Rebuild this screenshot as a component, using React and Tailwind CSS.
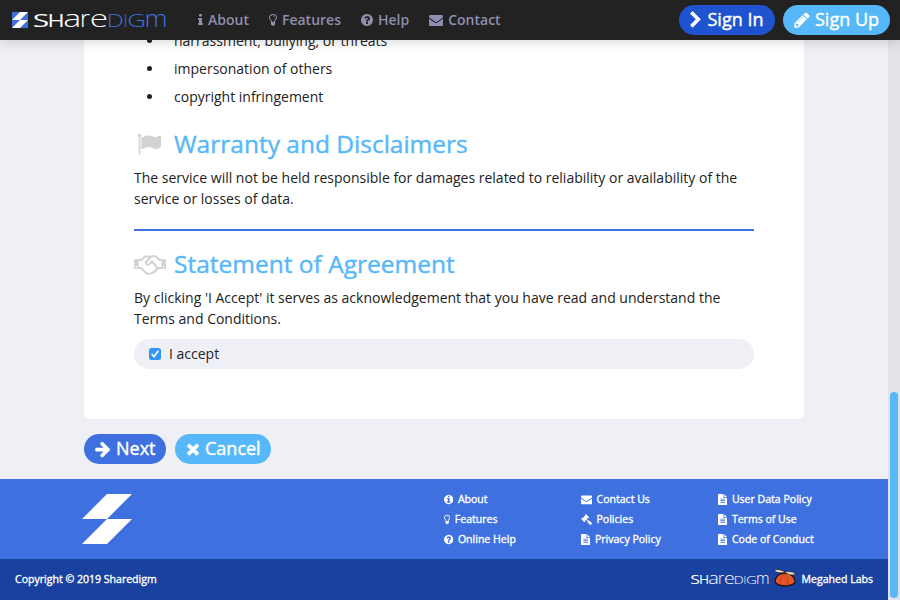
import React from "react";

const CIRCLE = "M1664 896q0 209-103 385.5t-279.5 279.5-385.5 103-385.5-103-279.5-279.5-103-385.5 103-385.5 279.5-279.5 385.5-103 385.5 103 279.5 279.5 103 385.5z";

const PATHS = {
  chevron: "M1363 877l-742 742q-19 19-45 19t-45-19l-166-166q-19-19-19-45t19-45l531-531-531-531q-19-19-19-45t19-45l166-166q19-19 45-19t45 19l742 742q19 19 19 45t-19 45z",
  arrow: "M1600 960q0 54-37 91l-651 651q-39 37-91 37-51 0-90-37l-75-75q-38-38-38-91t38-91l293-293h-704q-52 0-84.5-37.5t-32.5-90.5v-128q0-53 32.5-90.5t84.5-37.5h704l-293-294q-38-36-38-90t38-90l75-75q38-38 90-38 53 0 91 38l651 651q37 35 37 90z",
  times: "M1490 1322q0 40-28 68l-136 136q-28 28-68 28t-68-28l-294-294-294 294q-28 28-68 28t-68-28l-136-136q-28-28-28-68t28-68l294-294-294-294q-28-28-28-68t28-68l136-136q28-28 68-28t68 28l294 294 294-294q28-28 68-28t68 28l136 136q28 28 28 68t-28 68l-294 294 294 294q28 28 28 68z",
  pencil: "M491 1536l91-91-235-235-91 91v107h128v128h107zm523-928q0-22-22-22-10 0-17 7l-542 542q-7 7-7 17 0 22 22 22 10 0 17-7l542-542q7-7 7-17zm-54-192l416 416-832 832h-416v-416zm683 96q0 53-37 90l-166 166-416-416 166-165q36-38 90-38 53 0 91 38l235 234q37 39 37 91z",
  info: "M1216 1344v128q0 26-19 45t-45 19h-512q-26 0-45-19t-19-45v-128q0-26 19-45t45-19h64v-384h-64q-26 0-45-19t-19-45v-128q0-26 19-45t45-19h384q26 0 45 19t19 45v576h64q26 0 45 19t19 45zm-128-1152v192q0 26-19 45t-45 19h-256q-26 0-45-19t-19-45v-192q0-26 19-45t45-19h256q26 0 45 19t19 45z",
  question: "M1024 1376v-192q0-14-9-23t-23-9h-192q-14 0-23 9t-9 23v192q0 14 9 23t23 9h192q14 0 23-9t9-23zm256-672q0-88-55.5-163t-138.5-116-170-41q-243 0-371 213-15 24 8 42l132 100q7 6 19 6 16 0 25-12 53-68 86-92 34-24 86-24 48 0 85.5 26t37.5 59q0 38-20 61t-68 45q-63 28-115.5 86.5t-52.5 125.5v36q0 14 9 23t23 9h192q14 0 23-9t9-23q0-19 21.5-49.5t54.5-49.5q32-18 49-28.5t46-35 44.5-48 28-60.5 12.5-81z" + CIRCLE,
  infoCircle: "M1152 1376v-160q0-14-9-23t-23-9h-96v-512q0-14-9-23t-23-9h-320q-14 0-23 9t-9 23v160q0 14 9 23t23 9h96v320h-96q-14 0-23 9t-9 23v160q0 14 9 23t23 9h448q14 0 23-9t9-23zm-128-896v-160q0-14-9-23t-23-9h-192q-14 0-23 9t-9 23v160q0 14 9 23t23 9h192q14 0 23-9t9-23z" + CIRCLE,
  envelope: "M1792 710v794q0 66-47 113t-113 47h-1472q-66 0-113-47t-47-113v-794q44 49 101 87 362 246 497 345 57 42 92.5 65.5t94.5 48 110 24.5h2q51 0 110-24.5t94.5-48 92.5-65.5q170-123 498-345 57-39 100-87zm0-294q0 79-49 151t-122 123q-376 261-468 325-10 7-42.5 31t-54 38.5-52 32.5-57.5 27-50 9h-2q-23 0-50-9t-57.5-27-52-32.5-54-38.5-42.5-31q-91-64-262-182.5t-205-142.5q-62-42-117-115.5t-55-136.5q0-78 41.5-130t118.5-52h1472q65 0 112.5 47t47.5 113z",
  bulb: "M1120 576q0 13-9.5 22.5t-22.5 9.5-22.5-9.5-9.5-22.5q0-46-54-71t-106-25q-13 0-22.5-9.5t-9.5-22.5 9.5-22.5 22.5-9.5q50 0 99.5 16t87 54 37.5 90zm160 0q0-72-34.5-134t-90-101.5-123-62-136.5-22.5-136.5 22.5-123 62-90 101.5-34.5 134q0 101 68 180 10 11 30.5 33t30.5 33q128 153 141 298h228q13-145 141-298 10-11 30.5-33t30.5-33q68-79 68-180zm128 0q0 155-103 268-45 49-74.5 87t-59.5 95.5-34 107.5q47 28 47 82 0 37-25 64 25 27 25 64 0 52-45 81 13 23 13 47 0 46-31.5 71t-77.5 25q-20 44-60 70t-87 26-87-26-60-70q-46 0-77.5-25t-31.5-71q0-24 13-47-45-29-45-81 0-37 25-64-25-27-25-64 0-54 47-82-4-50-34-107.5t-59.5-95.5-74.5-87q-103-113-103-268 0-99 44.5-184.5t117-142 164-89 186.5-32.5 186.5 32.5 164 89 117 142 44.5 184.5z",
  file: "M1596 476q14 14 28 36h-472v-472q22 14 36 28zm-476 164h544v1056q0 40-28 68t-68 28h-1344q-40 0-68-28t-28-68v-1600q0-40 28-68t68-28h800v544q0 40 28 68t68 28zm160 736v-64q0-14-9-23t-23-9h-704q-14 0-23 9t-9 23v64q0 14 9 23t23 9h704q14 0 23-9t9-23zm0-256v-64q0-14-9-23t-23-9h-704q-14 0-23 9t-9 23v64q0 14 9 23t23 9h704q14 0 23-9t9-23zm0-256v-64q0-14-9-23t-23-9h-704q-14 0-23 9t-9 23v64q0 14 9 23t23 9h704q14 0 23-9t9-23z",
  gavel: "M1771 1536q0 53-37 90l-107 108q-39 37-91 37-53 0-90-37l-363-364q-38-36-38-90 0-53 43-96l-256-256-126 126q-14 14-34 14t-34-14q2 2 12.5 12t12.5 13 10 11.5 10 13.5 6 13.5 5.5 16.5 1.5 18q0 38-28 68-3 3-16.5 18t-19 20.5-18.5 16.5-22 15.5-22 9-26 4.5q-40 0-68-28l-408-408q-28-28-28-68 0-13 4.5-26t9-22 15.5-22 16.5-18.5 20.5-19 18-16.5q30-28 68-28 10 0 18 1.5t16.5 5.5 13.5 6 13.5 10 11.5 10 13 12.5 12 12.5q-14-14-14-34t14-34l348-348q14-14 34-14t34 14q-2-2-12.5-12t-12.5-13-10-11.5-10-13.5-6-13.5-5.5-16.5-1.5-18q0-38 28-68 3-3 16.5-18t19-20.5 18.5-16.5 22-15.5 22-9 26-4.5q40 0 68 28l408 408q28 28 28 68 0 13-4.5 26t-9 22-15.5 22-16.5 18.5-20.5 19-18 16.5q-30 28-68 28-10 0-18-1.5t-16.5-5.5-13.5-6-13.5-10-11.5-10-13-12.5-12-12.5q14 14 14 34t-14 34l-126 126 256 256q43-43 96-43 52 0 91 37l363 363q37 39 37 91z",
  flag: "M320 256q0 72-64 110v1266q0 13-9.5 22.5t-22.5 9.5h-64q-13 0-22.5-9.5t-9.5-22.5v-1266q-64-38-64-110 0-53 37.5-90.5t90.5-37.5 90.5 37.5 37.5 90.5zm1472 64v763q0 25-12.5 38.5t-39.5 27.5q-215 116-369 116-61 0-123.5-22t-108.5-48-115.5-48-142.5-22q-192 0-464 146-17 9-33 9-26 0-45-19t-19-45v-742q0-32 31-55 21-14 79-43 236-120 421-120 107 0 200 29t219 88q38 19 88 19 54 0 117.5-21t110-47 88-47 54.5-21q26 0 45 19t19 45z",
};

// Icons share a 1792-unit grid; `box` trims the side bearings of narrow ones.
function Icon({ name, box = "0 0 1792 1792", className }) {
  return (
    <svg viewBox={box} className={`shrink-0 fill-current ${className}`} fillRule="evenodd">
      <path d={PATHS[name]} />
    </svg>
  );
}

function Handshake() {
  return (
    <svg viewBox="0 0 32 20" className="h-5 w-8" fill="none" stroke="#d2d2d2" strokeWidth="2" strokeLinejoin="round" strokeLinecap="round">
      <path d="M0 4.200H4.500V13.800H0ZM27.500 4.200H32V13.800H27.500ZM2.200 11a.8.8 0 1 0 .1 0ZM29.800 11a.8.8 0 1 0 .1 0Z" fill="#d2d2d2" fillRule="evenodd" stroke="none" />
      <path d="M4.500 5H7.500L10.300 2.200Q11 1.500 12 1.500H14.500L16 2.200L17.500 1.300H21Q22 1.300 22.700 2L25.500 5H27.500M4.500 13H7L11.500 17.500Q13.500 19.500 16 18.600Q18.500 18.700 19.500 17Q21.800 16.800 22.300 14.500L24.500 13H27.500" />
      <path d="M16.500 2.200L12 7Q11.400 8.300 12.500 9.300Q13.800 10.300 15.200 9.200L18 6.500L23 12.500Q23.500 13.800 22.300 14.500" />
    </svg>
  );
}

// [glyph, left edge, ink width, ink start in em, ink width in em, x-height glyph]
const LETTERS = [
  ["S", 0, 13.7, 0.045, 0.456, false],
  ["H", 15.7, 12.6, 0.098, 0.541, false],
  ["a", 30.7, 14.6, 0.046, 0.429, true],
  ["r", 48, 8.3, 0.086, 0.314, true],
  ["e", 57.7, 15.3, 0.056, 0.458, true],
  ["D", 75, 13.7, 0.098, 0.57, false],
  ["I", 91, 1.5, 0.098, 0.083, false],
  ["G", 94.7, 15.3, 0.061, 0.595, false],
  ["m", 112.7, 19.8, 0.086, 0.761, true],
];

function Wordmark({ className, accent }) {
  return (
    <svg viewBox="0 0 134 18" preserveAspectRatio="none" className={`overflow-visible ${className}`}>
      {LETTERS.map(([ch, x, w, start, ink, lower], i) => {
        const size = lower ? 23.4 : 17.6;
        const sx = w / (ink * size);
        return (
          <text
            key={i}
            transform={`translate(${x - start * size * sx} 14.7) scale(${sx} 1)`}
            fontFamily="'Open Sans', sans-serif"
            fontWeight={lower || i > 4 ? 300 : 400}
            fontSize={size}
            fill={i > 4 ? accent : "#fff"}
          >
            {ch}
          </text>
        );
      })}
    </svg>
  );
}

const NAV = [
  ["info", "About", "576 0 640 1792", "w-[5px]"],
  ["bulb", "Features", "384 0 1024 1792", "w-[8px]"],
  ["question", "Help", "128 0 1536 1792", "w-[12px]"],
  ["envelope", "Contact", "0 0 1792 1792", "w-[14px]"],
];

const LINKS = [
  ["w-[137px]", [
    ["infoCircle", "About", "128 0 1536 1792", "w-[9.4px]"],
    ["bulb", "Features", "384 0 1024 1792", "w-[6.3px]"],
    ["question", "Online Help", "128 0 1536 1792", "w-[9.4px]"],
  ]],
  ["w-[137px]", [
    ["envelope", "Contact Us", "0 0 1792 1792", "w-[11px]"],
    ["gavel", "Policies", "0 0 1792 1792", "w-[11px]"],
    ["file", "Privacy Policy", "128 0 1536 1792", "w-[9.4px]"],
  ]],
  ["w-[170px]", [
    ["file", "User Data Policy", "128 0 1536 1792", "w-[9.4px]"],
    ["file", "Terms of Use", "128 0 1536 1792", "w-[9.4px]"],
    ["file", "Code of Conduct", "128 0 1536 1792", "w-[9.4px]"],
  ]],
];

function Beanie() {
  return (
    <svg viewBox="0 0 22 18" className="h-[18px] w-[22px]">
      <path d="M1 12C1.500 7.500 6 4 11 4C16.500 4 20.500 8 21 12.500C21 15.500 15 17.200 10.500 17C5.500 16.700 1 14.500 1 12Z" fill="#e8542a" stroke="#24150f" strokeWidth="1.300" />
      <path d="M11 5C7 7 6 11 6.500 15.500M11 5C13.500 8 14 12 13.500 16.300" stroke="#a83a1a" strokeWidth=".7" fill="none" />
      <path d="M11 3.200C7.500 4.200 1.500 3.500 .8 1.600C1.500 -.3 8 .8 11 3.200C14.500 2.200 20.500 3 21 5C20 6.700 13.500 5.700 11 3.200Z" fill="#f1e5bd" stroke="#24150f" strokeWidth=".5" />
    </svg>
  );
}

export default function App() {
  return (
    <div className="relative flex h-[600px] w-[900px] overflow-hidden bg-[#eff0f6] font-['Open_Sans',sans-serif] text-[14px] leading-[21px] text-[#222]">
      <div className="flex w-[888px] flex-col">
        <main className="h-[479px] px-[84px]">
          <div className="h-[419px] w-[720px] overflow-hidden rounded-b-[5px] bg-white px-[50px] pt-[26px]">
            <ul>
              {["harrassment, bullying, or threats", "impersonation of others", "copyright infringement"].map((t) => (
                <li key={t} className="flex h-7 items-center">
                  <span className="ml-[13px] mr-[22px] size-[5px] rounded-full bg-[#222]" />
                  {t}
                </li>
              ))}
            </ul>
            <h2 className="mt-[18px] flex h-8 items-center text-[24.5px] leading-8 text-[#57b8f9] [-webkit-text-stroke:0.4px]">
              <span className="flex w-10 pl-[3px]"><Icon name="flag" className="size-6 text-[#d2d2d2]" /></span>
              Warranty and Disclaimers
            </h2>
            <p className="mt-[7px]">
              The service will not be held responsible for damages related to reliability or availability of the<br />service or losses of data.
            </p>
            <div className="mt-5 h-[2px] bg-[#3f70df]" />
            <h2 className="mt-[17px] flex h-8 items-center text-[24.5px] leading-8 text-[#57b8f9] [-webkit-text-stroke:0.4px]">
              <span className="flex w-10 pt-px"><Handshake /></span>
              Statement of Agreement
            </h2>
            <p className="mt-[7px]">
              By clicking 'I Accept' it serves as acknowledgement that you have read and understand the<br />Terms and Conditions.
            </p>
            <label className="mt-[10px] flex h-[30px] items-center rounded-full bg-[#eff0f6] pl-[15px]">
              <span className="mr-2 flex size-3 items-center justify-center rounded-[2.5px] bg-[#3296fb]">
                <svg viewBox="0 0 12 12" className="size-3"><path d="M3 6.300 5 8.600 9 3.200" fill="none" stroke="#fff" strokeWidth="1.600" strokeLinecap="round" /></svg>
              </span>
              <span className="pb-[2px]">I accept</span>
            </label>
          </div>
          <div className="mt-[15px] flex gap-[9px] text-[18px] text-white [-webkit-text-stroke:0.4px]">
            <button className="flex h-[30px] w-[82px] items-center gap-[4px] rounded-full bg-[#3f70df] pl-[10px]">
              <Icon name="arrow" className="size-[18px]" /><span className="pb-[2px]">Next</span>
            </button>
            <button className="flex h-[30px] w-24 items-center gap-[5px] rounded-full bg-[#57b8f9] pl-[11px]">
              <Icon name="times" box="192 0 1408 1792" className="h-[18px] w-[14px]" /><span className="pb-[2px]">Cancel</span>
            </button>
          </div>
        </main>
        <footer className="flex h-20 bg-[#3f70df] pt-[10px] text-[10.55px] leading-5 text-white [-webkit-text-stroke:0.35px]">
          <svg viewBox="0 0 50 50" className="ml-[82px] mt-[5px] size-[50px] fill-white"><path d="M25 0H50L25 25H0ZM25 25H50L25 50H0Z" /></svg>
          <div className="ml-[312px] flex">
            {LINKS.map(([w, items], i) => (
              <ul key={i} className={w}>
                {items.map(([icon, label, box, iw]) => (
                  <li key={label} className="flex h-5 items-center gap-[4.5px]">
                    <Icon name={icon} box={box} className={`h-[11px] ${iw}`} />{label}
                  </li>
                ))}
              </ul>
            ))}
          </div>
        </footer>
        <div className="flex h-[41px] items-center bg-[#1941a0] px-[15px] text-[10.55px] text-white [-webkit-text-stroke:0.35px]">
          <span>Copyright © 2019 Sharedigm</span>
          <Wordmark className="ml-auto h-[12px] w-[79px] [-webkit-text-stroke:0.3px]" accent="#fff" />
          <span className="ml-[4px] mr-[6px] pb-[3px]"><Beanie /></span>
          <span>Megahed Labs</span>
        </div>
      </div>
      <div className="flex w-3 items-start justify-center bg-[#e2e2e8] pt-[392px]">
        <div className="h-[206px] w-2 rounded-full bg-[#57b8f9]" />
      </div>
      <header className="absolute inset-x-0 top-0 flex h-10 items-center bg-[#222] pl-3 shadow-[0_0_15px_rgba(0,0,0,0.2)]">
        <svg viewBox="0 0 16 16" className="size-4"><path d="M0 0H16V16H0Z" fill="#3f70df" /><path d="M8 0H16L8 8H0ZM8 8H16L8 16H0Z" fill="#fff" /></svg>
        <Wordmark className="ml-[6px] mt-[2px] h-[18px] w-[134px] [-webkit-text-stroke:0.2px]" accent="#3f70df" />
        <nav className="ml-[30px] flex gap-5 font-semibold text-[#8e8eae]">
          {NAV.map(([icon, label, box, size]) => (
            <a key={label} className="flex items-center gap-[5px]">
              <Icon name={icon} box={box} className={`h-[14px] ${size}`} /><span className="pb-[2px]">{label}</span>
            </a>
          ))}
        </nav>
        <div className="ml-auto mr-[10px] flex gap-2 text-[18px] text-white [-webkit-text-stroke:0.4px]">
          <button className="flex h-[30px] w-24 items-center gap-[5.5px] rounded-full bg-[#2053cf] pl-[10px]">
            <Icon name="chevron" box="292 0 1152 1792" className="h-[18px] w-[13px]" /><span className="pb-[2px]">Sign In</span>
          </button>
          <button className="flex h-[30px] w-[107px] items-center gap-[4px] rounded-full bg-[#57b8f9] pl-[10px]">
            <Icon name="pencil" className="size-[18px]" /><span className="pb-[2px]">Sign Up</span>
          </button>
        </div>
      </header>
    </div>
  );
}
